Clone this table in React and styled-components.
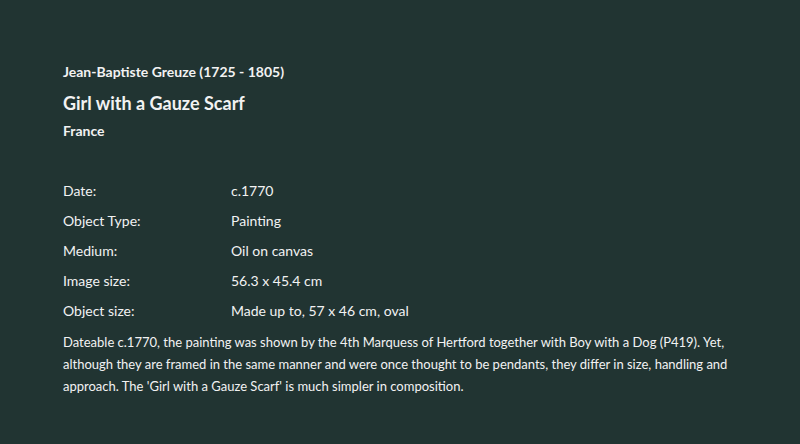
import React from "react";
import styled, { createGlobalStyle } from "styled-components";

const GlobalStyle = createGlobalStyle`
  html, body {
    margin: 0;
    padding: 0;
    background: #213432;
  }
  body {
    font-family: Lato, "Noto Sans", sans-serif;
    color: #f2f2f2;
  }
`;

const Page = styled.div`
  width: 800px;
  height: 444px;
  box-sizing: border-box;
  padding: 62px 63px 0 63px;
  background: #213432;
`;

const Artist = styled.div`
  font-size: 14px;
  font-weight: 700;
  line-height: 20px;
`;

const Title = styled.h1`
  margin: 10px 0 0;
  font-size: 18px;
  font-weight: 700;
  line-height: 22px;
`;

const Place = styled.div`
  margin-top: 7px;
  font-size: 14px;
  font-weight: 700;
  line-height: 20px;
`;

const Facts = styled.dl`
  display: grid;
  grid-template-columns: 168px 1fr;
  grid-auto-rows: 30px;
  margin: 40px 0 0;
  font-size: 14px;
  line-height: 20px;
`;

const Label = styled.dt`
  margin: 0;
`;

const Value = styled.dd`
  margin: 0;
`;

const Description = styled.p`
  margin: 0;
  font-size: 13px;
  line-height: 22px;
`;

const facts = [
  ["Date:", "c.1770"],
  ["Object Type:", "Painting"],
  ["Medium:", "Oil on canvas"],
  ["Image size:", "56.3 x 45.4 cm"],
  ["Object size:", "Made up to, 57 x 46 cm, oval"],
];

export default function App() {
  return (
    <Page>
      <GlobalStyle />
      <Artist>Jean-Baptiste Greuze (1725 - 1805)</Artist>
      <Title>Girl with a Gauze Scarf</Title>
      <Place>France</Place>
      <Facts>
        {facts.map(([k, v]) => (
          <React.Fragment key={k}>
            <Label>{k}</Label>
            <Value>{v}</Value>
          </React.Fragment>
        ))}
      </Facts>
      <Description>
        Dateable c.1770, the painting was shown by the 4th Marquess of Hertford
        together with Boy with a Dog (P419). Yet, although they are framed in
        the same manner and were once thought to be pendants, they differ in
        size, handling and approach. The 'Girl with a Gauze Scarf' is much
        simpler in composition.
      </Description>
    </Page>
  );
}
